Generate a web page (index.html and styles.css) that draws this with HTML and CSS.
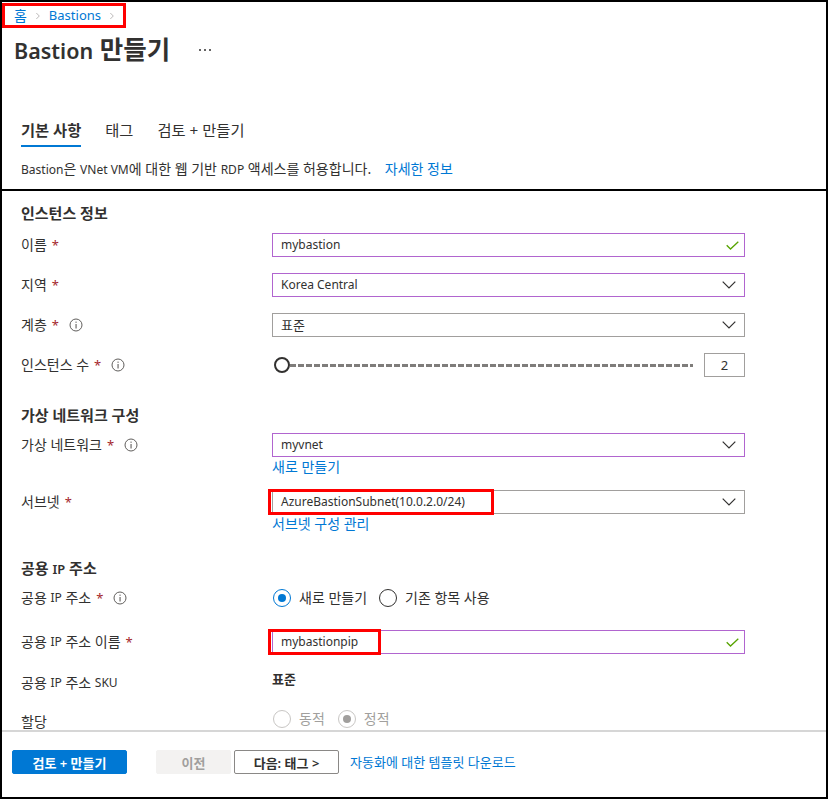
FILE: index.html
```html
<!DOCTYPE html>
<html lang="ko">
<head>
<meta charset="utf-8">
<title>Bastion 만들기</title>
<link rel="stylesheet" href="styles.css">
</head>
<body>
<div class="frame">
  <header class="top">
    <nav class="crumbs">
      <a class="crumb">홈</a>
      <svg class="sep" width="6" height="10" viewBox="0 0 6 10"><path d="M0.5 0.5 L5 5 L0.5 9.5" fill="none" stroke="#a19f9d" stroke-width="1.1"/></svg>
      <a class="crumb en-crumb">Bastions</a>
      <svg class="sep" width="6" height="10" viewBox="0 0 6 10"><path d="M0.5 0.5 L5 5 L0.5 9.5" fill="none" stroke="#a19f9d" stroke-width="1.1"/></svg>
    </nav>
    <div class="title-row">
      <h1 class="title"><span class="en-title">Bastion</span> 만들기</h1>
      <svg class="more" width="14" height="4" viewBox="0 0 14 4"><circle cx="2" cy="2" r="1" fill="#323130"/><circle cx="7" cy="2" r="1" fill="#323130"/><circle cx="12" cy="2" r="1" fill="#323130"/></svg>
    </div>
    <div class="tabs">
      <span class="tab active">기본 사항</span>
      <span class="tab">태그</span>
      <span class="tab">검토 + 만들기</span>
    </div>
    <p class="desc"><span class="en">Bastion</span>은 <span class="en">VNet VM</span>에 대한 웹 기반 <span class="en">RDP</span> 액세스를 허용합니다. <a class="link">자세한 정보</a></p>
  </header>

  <main class="content">
    <h2 class="sec-title first">인스턴스 정보</h2>
    <div class="row r-first">
      <div class="label">이름<span class="req">*</span></div>
      <div class="input purple"><span class="val">mybastion</span>
        <svg class="check" width="13" height="9" viewBox="0 0 13 9"><path d="M0.7 4.2 L4.5 8 L12.3 0.7" fill="none" stroke="#57a300" stroke-width="1.3"/></svg></div>
    </div>
    <div class="row">
      <div class="label">지역<span class="req">*</span></div>
      <div class="input purple"><span class="val">Korea Central</span>
        <svg class="chev" width="14" height="8" viewBox="0 0 14 8"><path d="M0.7 0.7 L7 7 L13.3 0.7" fill="none" stroke="#323130" stroke-width="1.2"/></svg></div>
    </div>
    <div class="row">
      <div class="label">계층<span class="req">*</span>
        <svg class="info" width="14" height="14" viewBox="0 0 14 14"><circle cx="7" cy="7" r="6" fill="none" stroke="#605e5c" stroke-width="1"/><rect x="6.5" y="6" width="1.1" height="4.5" fill="#605e5c"/><rect x="6.5" y="3.6" width="1.1" height="1.2" fill="#605e5c"/></svg></div>
      <div class="input gray"><span class="val ko">표준</span>
        <svg class="chev" width="14" height="8" viewBox="0 0 14 8"><path d="M0.7 0.7 L7 7 L13.3 0.7" fill="none" stroke="#323130" stroke-width="1.2"/></svg></div>
    </div>
    <div class="row">
      <div class="label">인스턴스 수<span class="req">*</span>
        <svg class="info" width="14" height="14" viewBox="0 0 14 14"><circle cx="7" cy="7" r="6" fill="none" stroke="#605e5c" stroke-width="1"/><rect x="6.5" y="6" width="1.1" height="4.5" fill="#605e5c"/><rect x="6.5" y="3.6" width="1.1" height="1.2" fill="#605e5c"/></svg></div>
      <div class="slider-wrap">
        <div class="slider"><span class="thumb"></span><span class="track"></span></div>
        <div class="numbox">2</div>
      </div>
    </div>

    <h2 class="sec-title second">가상 네트워크 구성</h2>
    <div class="row r-vnet">
      <div class="label">가상 네트워크<span class="req">*</span>
        <svg class="info" width="14" height="14" viewBox="0 0 14 14"><circle cx="7" cy="7" r="6" fill="none" stroke="#605e5c" stroke-width="1"/><rect x="6.5" y="6" width="1.1" height="4.5" fill="#605e5c"/><rect x="6.5" y="3.6" width="1.1" height="1.2" fill="#605e5c"/></svg></div>
      <div class="input purple"><span class="val">myvnet</span>
        <svg class="chev" width="14" height="8" viewBox="0 0 14 8"><path d="M0.7 0.7 L7 7 L13.3 0.7" fill="none" stroke="#323130" stroke-width="1.2"/></svg></div>
    </div>
    <div class="sub-link"><a class="link">새로 만들기</a></div>
    <div class="row r-subnet">
      <div class="label">서브넷<span class="req">*</span></div>
      <div class="input gray"><span class="val">AzureBastionSubnet(10.0.2.0/24)</span>
        <svg class="chev" width="14" height="8" viewBox="0 0 14 8"><path d="M0.7 0.7 L7 7 L13.3 0.7" fill="none" stroke="#323130" stroke-width="1.2"/></svg>
        <span class="mark mark-subnet"></span></div>
    </div>
    <div class="sub-link"><a class="link">서브넷 구성 관리</a></div>

    <h2 class="sec-title third">공용 <span class="en">IP</span> 주소</h2>
    <div class="row r-radio">
      <div class="label">공용 <span class="en">IP</span> 주소<span class="req">*</span>
        <svg class="info" width="14" height="14" viewBox="0 0 14 14"><circle cx="7" cy="7" r="6" fill="none" stroke="#605e5c" stroke-width="1"/><rect x="6.5" y="6" width="1.1" height="4.5" fill="#605e5c"/><rect x="6.5" y="3.6" width="1.1" height="1.2" fill="#605e5c"/></svg></div>
      <div class="radios">
        <span class="radio checked"></span><span class="rlabel">새로 만들기</span>
        <span class="radio"></span><span class="rlabel">기존 항목 사용</span>
      </div>
    </div>
    <div class="row r-pipname">
      <div class="label">공용 <span class="en">IP</span> 주소 이름<span class="req">*</span></div>
      <div class="input purple"><span class="val">mybastionpip</span>
        <svg class="check" width="13" height="9" viewBox="0 0 13 9"><path d="M0.7 4.2 L4.5 8 L12.3 0.7" fill="none" stroke="#57a300" stroke-width="1.3"/></svg>
        <span class="mark mark-pip"></span></div>
    </div>
    <div class="row r-sku">
      <div class="label">공용 <span class="en">IP</span> 주소 <span class="en">SKU</span></div>
      <div class="static-val">표준</div>
    </div>
    <div class="row r-alloc">
      <div class="label">할당</div>
      <div class="radios disabled">
        <span class="radio"></span><span class="rlabel">동적</span>
        <span class="radio checked"></span><span class="rlabel">정적</span>
      </div>
    </div>
  </main>

  <footer class="actions">
    <button class="btn primary">검토 + 만들기</button>
    <button class="btn prev" disabled>이전</button>
    <button class="btn next">다음: 태그 &gt;</button>
    <a class="link foot-link">자동화에 대한 템플릿 다운로드</a>
  </footer>
</div>
</body>
</html>
```

FILE: styles.css
```css
* { box-sizing: border-box; }
html, body { margin: 0; padding: 0; background: #fff; }
body {
  font-family: "Noto Sans", "Noto Sans CJK KR", sans-serif;
  color: #323130;
  font-size: 14px;
}
.en { font-size: 0.86em; }
.frame {
  width: 828px;
  height: 799px;
  border: 2px solid #000;
  display: flex;
  flex-direction: column;
  overflow: hidden;
}
.top {
  height: 189px;
  flex: none;
  border-bottom: 2px solid #000;
  display: flex;
  flex-direction: column;
  align-items: flex-start;
}
.crumbs {
  margin-top: 1px;
  width: 124px;
  height: 25px;
  border: 3px solid #ff0000;
  display: flex;
  align-items: center;
  padding-left: 9px;
  font-size: 14px;
}
.crumb { color: #0078d4; line-height: 19px; }
.en-crumb { font-size: 13px; }
.sep { margin: 0 9px 0 9px; }
.title-row {
  margin-top: 6px;
  margin-left: 12px;
  height: 32px;
  display: flex;
  align-items: center;
}
.title {
  margin: 0;
  font-size: 25.5px;
  font-weight: 600;
  line-height: 32px;
  color: #323130;
}
.en-title { font-size: 21.5px; }
.more { margin-left: 28px; }
.tabs {
  margin-top: 54px;
  margin-left: 19px;
  display: flex;
  gap: 24px;
}
.tab {
  font-size: 15.3px;
  line-height: 20px;
  padding-bottom: 5px;
  border-bottom: 2px solid transparent;
  color: #323130;
}
.tab.active { font-weight: 600; border-bottom-color: #0078d4; }
.desc {
  margin: 13px 0 0 19px;
  line-height: 18px;
  font-size: 14px;
  color: #323130;
}
.link { color: #0078d4; text-decoration: none; }
.desc .link { margin-left: 10px; }

.content {
  height: 541px;
  flex: none;
  overflow: hidden;
  border-bottom: 2px solid #d6d6d6;
  padding: 0 0 0 19px;
}
.sec-title {
  margin: 0;
  font-size: 15px;
  font-weight: 600;
  line-height: 20px;
  color: #323130;
}
.sec-title.first { margin-top: 12px; }
.sec-title.second { margin-top: 28px; }
.sec-title.third { margin-top: 25px; }

.row {
  display: grid;
  grid-template-columns: 251px 473px;
  align-items: center;
  min-height: 24px;
  margin-top: 16px;
}
.row.r-first { margin-top: 10px; }
.row.r-vnet { margin-top: 8px; }
.row.r-subnet { margin-top: 14px; }
.row.r-radio { margin-top: 7px; }
.row.r-pipname { margin-top: 20px; }
.row.r-sku { margin-top: 17px; }
.row.r-alloc { margin-top: 15px; }

.label {
  display: flex;
  align-items: center;
  white-space: pre;
  font-size: 14px;
  line-height: 18px;
  color: #323130;
}
.req { color: #a4262c; margin-left: 5px; font-size: 13px; }
.info { margin-left: 10px; }

.input {
  position: relative;
  height: 24px;
  border: 1px solid #8a8886;
  display: flex;
  align-items: center;
  justify-content: space-between;
  padding: 0 8px 0 8px;
  color: #323130;
}
.input.purple { border-color: #b165cf; }
.input.gray { border-color: #a19f9d; }
.val { line-height: 18px; font-size: 12px; }
.val.ko { font-size: 13px; }
.check { margin-right: -3px; }

.mark {
  position: absolute;
  border: 3px solid #ff0000;
  top: -2px;
  left: -5px;
  height: 26px;
}
.mark-subnet { width: 226px; }
.mark-pip { width: 113px; }

.sub-link {
  margin-left: 251px;
  margin-top: 1px;
  line-height: 18px;
  font-size: 14px;
}

.slider-wrap {
  display: flex;
  align-items: center;
}
.slider {
  flex: 1;
  display: flex;
  align-items: center;
  margin-left: 2px;
  margin-right: 11px;
}
.thumb {
  width: 16px;
  height: 16px;
  border: 2px solid #323130;
  border-radius: 50%;
  background: #fff;
  flex: none;
}
.track {
  flex: 1;
  height: 3px;
  background: repeating-linear-gradient(90deg, #7f7d7b 0 6px, #ffffff 6px 8px);
}
.numbox {
  width: 41px;
  height: 24px;
  border: 1px solid #a19f9d;
  display: flex;
  align-items: center;
  justify-content: center;
  font-size: 13px;
}

.radios {
  display: flex;
  align-items: center;
  padding-left: 1px;
}
.radio {
  width: 18px;
  height: 18px;
  border: 1px solid #323130;
  border-radius: 50%;
  flex: none;
  display: flex;
  align-items: center;
  justify-content: center;
}
.radio.checked { border-color: #0078d4; }
.radio.checked::after {
  content: "";
  width: 8px;
  height: 8px;
  border-radius: 50%;
  background: #0078d4;
}
.rlabel {
  margin-left: 8px;
  margin-right: 12px;
  line-height: 18px;
  font-size: 14px;
}
.radios.disabled .radio { border-color: #c8c6c4; }
.radios.disabled .radio.checked::after { background: #a19f9d; }
.radios.disabled .rlabel { color: #a19f9d; margin-right: 13px; }
.r-alloc .radios { align-self: start; }

.static-val {
  align-self: start;
  line-height: 16px;
  font-size: 13px;
  font-weight: 600;
  color: #323130;
}

.actions {
  flex: 1;
  display: flex;
  align-items: flex-start;
  padding: 18px 0 0 10px;
  font-size: 13px;
}
.btn {
  height: 24px;
  font-family: inherit;
  font-size: 13px;
  font-weight: 600;
  border-radius: 2px;
  padding: 0;
  display: flex;
  align-items: center;
  justify-content: center;
}
.btn.primary {
  width: 115px;
  background: #0078d4;
  border: 1px solid #0078d4;
  color: #fff;
}
.btn.prev {
  width: 75px;
  margin-left: 29px;
  background: #f3f2f1;
  border: 1px solid #f3f2f1;
  color: #a19f9d;
}
.btn.next {
  width: 105px;
  margin-left: 3px;
  background: #fff;
  border: 1px solid #8a8886;
  color: #323130;
}
.foot-link {
  margin-left: 11px;
  line-height: 24px;
  font-size: 13px;
}
```
